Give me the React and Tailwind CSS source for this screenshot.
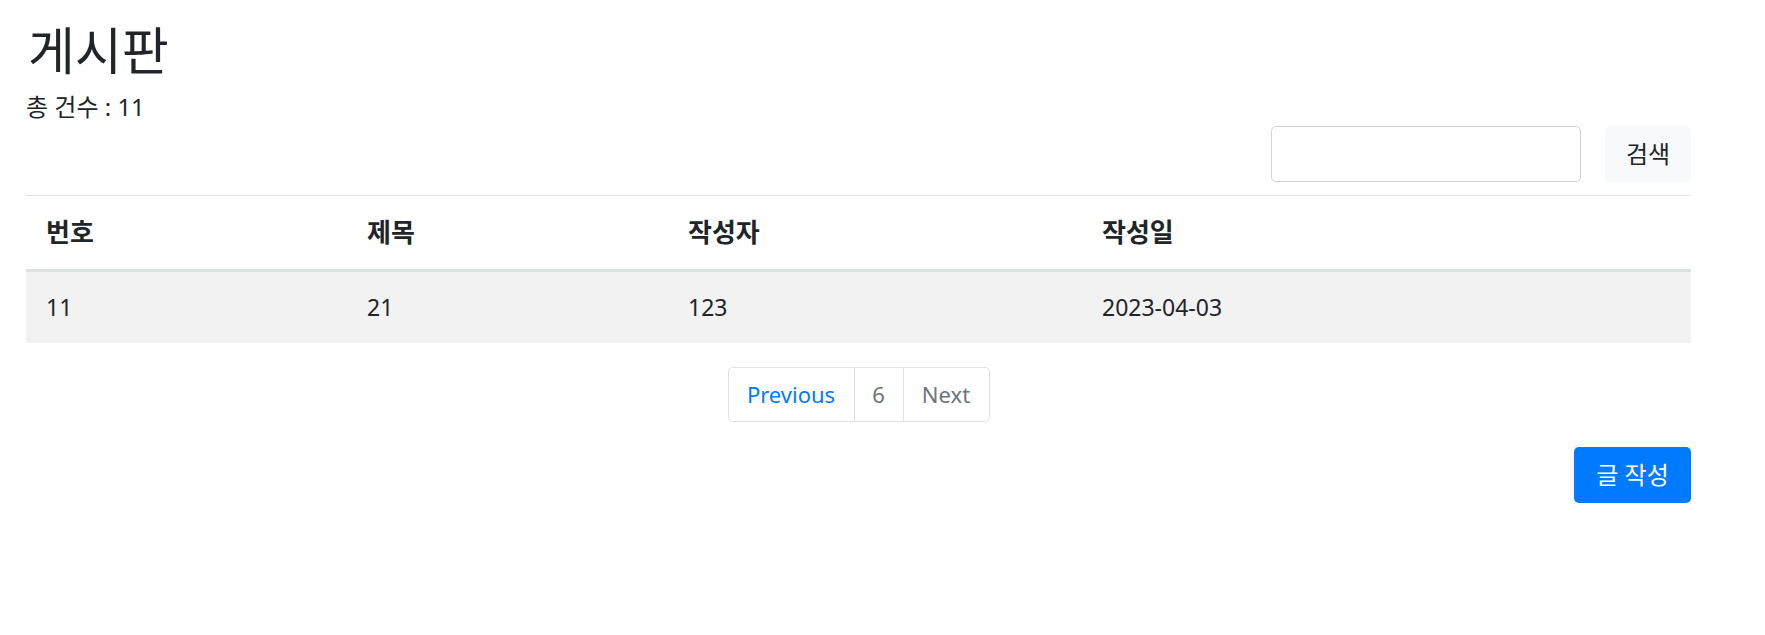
const rows = [{ id: 11, title: "21", writer: "123", date: "2023-04-03" }];

export default function App() {
  return (
    <div
      className="min-h-screen bg-white text-[#212529]"
      style={{ fontFamily: '"Noto Sans", "Noto Sans CJK KR", sans-serif' }}
    >
      <div className="ml-[26px] w-[1665px] pt-[20px]">
        <h1 className="text-[51px] leading-[60px] font-normal pl-[2px]">게시판</h1>
        <p className="text-[24px] leading-[30px] mt-[12px]">총 건수 : 11</p>

        <div className="flex justify-end items-center gap-[24px] mt-[4px]">
          <input
            type="text"
            className="w-[310px] h-[56px] rounded-[5px] border border-[#ced4da] bg-white outline-none px-3"
          />
          <button className="w-[86px] h-[56px] rounded-[5px] bg-[#f8f9fa] text-[24px] text-[#212529]">
            검색
          </button>
        </div>

        <table className="w-full table-fixed border-collapse mt-[13px] text-[23px]">
          <colgroup>
            <col className="w-[321px]" />
            <col className="w-[321px]" />
            <col className="w-[414px]" />
            <col />
          </colgroup>
          <thead>
            <tr className="border-t border-[#dee2e6] border-b-[3px] border-b-[#dee2e6] text-[26px]">
              <th className="text-left font-bold h-[75px] px-[20px]">번호</th>
              <th className="text-left font-bold px-[20px]">제목</th>
              <th className="text-left font-bold px-[20px]">작성자</th>
              <th className="text-left font-bold px-[20px]">작성일</th>
            </tr>
          </thead>
          <tbody>
            {rows.map((r) => (
              <tr key={r.id} className="bg-[#f2f2f2]">
                <td className="h-[72px] px-[20px]">{r.id}</td>
                <td className="px-[20px]">{r.title}</td>
                <td className="px-[20px]">{r.writer}</td>
                <td className="px-[20px]">{r.date}</td>
              </tr>
            ))}
          </tbody>
        </table>

        <div className="flex justify-center mt-[24px]">
          <div className="flex h-[55px] border border-[#dee2e6] rounded-[5px] text-[22px]">
            <a className="w-[125px] flex items-center justify-center text-[#007bff]">Previous</a>
            <a className="w-[49px] flex items-center justify-center text-[#6c757d] border-l border-[#dee2e6]">6</a>
            <a className="w-[86px] flex items-center justify-center text-[#6c757d] border-l border-[#dee2e6]">Next</a>
          </div>
        </div>

        <div className="flex justify-end mt-[25px]">
          <button className="w-[117px] h-[56px] rounded-[5px] bg-[#007bff] text-white text-[24px]">
            글 작성
          </button>
        </div>
      </div>
    </div>
  );
}
